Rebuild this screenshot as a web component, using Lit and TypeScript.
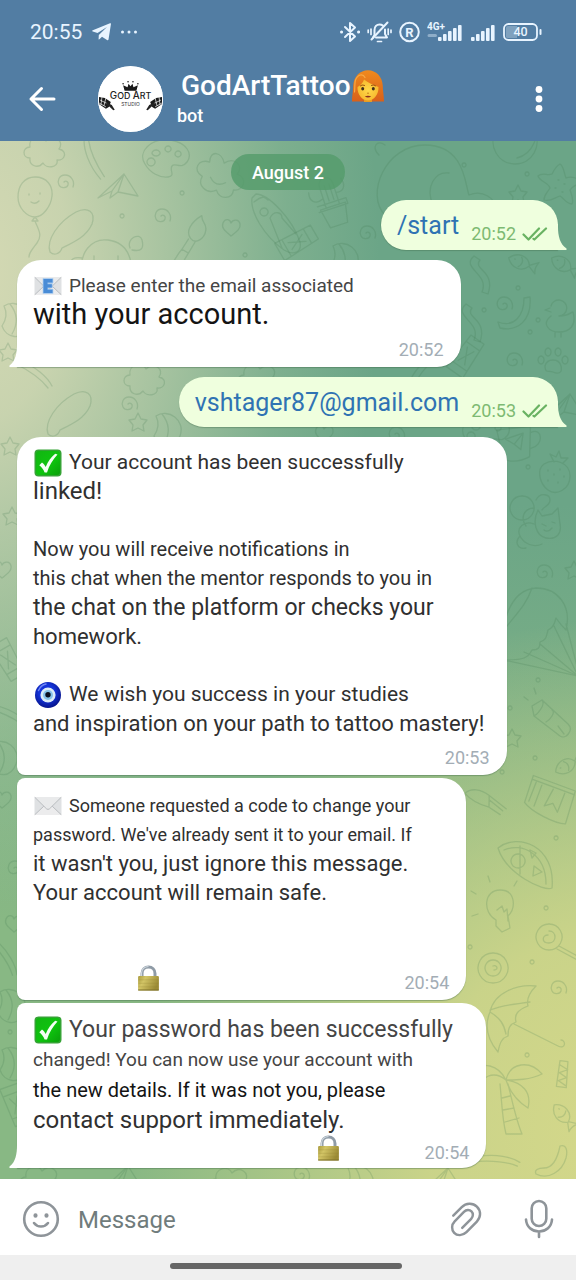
import { LitElement, html, svg, css, nothing } from "lit";
import type { TemplateResult } from "lit";
import { customElement, property } from "lit/decorators.js";
import { classMap } from "lit/directives/class-map.js";

type Size = "xs" | "s" | "m" | "ml" | "l" | "lx" | "xl" | "xxl";
interface Line { text?: string; size?: Size; icon?: string; tone?: string; }
interface Incoming {
  width: string;
  time: string;
  shape: string;
  lines: Line[];
  tail?: boolean;
  lock?: string;
}

/* ---------- small pictures ---------- */

const check = html`<svg class="emoji" viewBox="0 0 28 28" aria-label="check mark">
  <defs><linearGradient id="ck" x1="0" y1="0" x2="1" y2="1"><stop offset="0" stop-color="#12b512"/><stop offset=".55" stop-color="#0ec40e"/><stop offset="1" stop-color="#0aa00a"/></linearGradient></defs>
  <rect x=".5" y=".5" width="27" height="27" rx="4" fill="#35a335"/>
  <rect x="2" y="2" width="24" height="24" rx="3" fill="url(#ck)"/>
  <path d="M5.3 16.2 8 13.6c1.8 1.3 2.700 2.700 3.700 4.400C14 12.500 17 8.300 21.200 4.800l2.300.8C18.800 10.600 15.300 16.500 13 23.400h-2.400C9.500 20.500 7.700 18 5.300 16.200z" fill="#f4fff4"/>
</svg>`;

const nazar = html`<svg class="emoji" viewBox="0 0 28 28" aria-label="nazar amulet">
  <defs><radialGradient id="nz" cx=".45" cy=".4" r=".6"><stop offset=".5" stop-color="#1433d8"/><stop offset="1" stop-color="#06148c"/></radialGradient></defs>
  <circle cx="14" cy="14" r="13" fill="url(#nz)"/>
  <circle cx="14" cy="14" r="7.600" fill="#dcecf8"/>
  <circle cx="14" cy="14" r="5" fill="#86c3ea"/>
  <circle cx="14" cy="13.800" r="2.700" fill="#0c1020"/>
  <path d="M4.500 9.500C6 6 9 3.500 12 3" stroke="#6f86f5" stroke-width="1.500" fill="none" stroke-linecap="round"/>
</svg>`;

const envelope = (letter: boolean) => html`<svg class="emoji" viewBox="0 0 28 28" aria-label="envelope">
  <rect x=".5" y="5" width="27" height="18" fill="#dfe1e3"/>
  <path d="M.5 23 10.500 13.500h7L27.500 23z" fill="#ececed"/>
  <path d="M.5 5h27L15.500 17q-1.500 1.300-3 0z" fill="#e9eaeb"/>
  <path d="M.8 5.300 12.500 16.800q1.500 1.300 3 0L27.200 5.300M.8 22.700l9-8.500M27.200 22.700l-9-8.500" fill="none" stroke="#b9bcbf" stroke-width="1"/>
  ${letter ? svg`<path d="M9.500 7h9v3.400h-5v1.800h4.300v3.200h-4.300v2.300h5V21h-9z" fill="#4a8cd6" stroke="#9cc4ee" stroke-width="1.500" paint-order="stroke"/>` : nothing}
</svg>`;

const lock = html`<svg class="lock" viewBox="0 0 22 26" aria-label="locked">
  <defs><linearGradient id="lk" x1="0" x2="1" y1="0" y2=".4"><stop offset="0" stop-color="#a89a3c"/><stop offset=".35" stop-color="#d3c566"/><stop offset="1" stop-color="#9c8b35"/></linearGradient></defs>
  <path d="M4.500 12.500V8.500C4.500 4.500 7.300 2 11 2s6.500 2.500 6.500 6.500v4" fill="none" stroke="#8f9ba6" stroke-width="3"/>
  <path d="M4 12V8.300C4 4.300 7 1.500 11 1.500" fill="none" stroke="#cfd8df" stroke-width="1.200"/>
  <rect x=".6" y="11" width="20.800" height="14.500" rx="1" fill="url(#lk)"/>
  <path d="M1 14.800h20M1 18.300h20M1 21.800h20" stroke="#8d7f31" stroke-opacity=".3" stroke-width=".8"/>
  <path d="M.6 25h20.800" stroke="#7d702b" stroke-width="1"/>
</svg>`;

const woman = html`<svg class="woman" viewBox="0 0 34 34" aria-label="woman with red hair">
  <defs><linearGradient id="hr" x1="0" y1="0" x2="0" y2="1"><stop offset="0" stop-color="#f08a1d"/><stop offset="1" stop-color="#d9601a"/></linearGradient>
  <radialGradient id="fc" cx=".5" cy=".5" r=".6"><stop offset="0" stop-color="#ffd84a"/><stop offset="1" stop-color="#f5b52a"/></radialGradient></defs>
  <path d="M1 32.500C1 27 2 24 2.200 17 2.500 7.500 9 1.200 17 1.200S31.500 7.500 31.800 17c.2 7 1.200 10 1.200 15.500z" fill="url(#hr)"/>
  <path d="M13 27h8v6h-8z" fill="#e89c22"/>
  <path d="M6.500 18C9 16.500 12 14 13 10.500c4 3.500 9.500 5.500 14.500 7.500.3 7.500-4.500 13.500-10.500 13.500S6.200 25.500 6.500 18z" fill="url(#fc)"/>
  <path d="M14 8.500C12 4.500 7 5 4.500 11 3.500 14 4 20 3.500 23" fill="none" stroke="#f7a945" stroke-width="1.200" stroke-linecap="round"/>
  <ellipse cx="11.700" cy="19.800" rx="1.500" ry="1.800" fill="#43301c"/><ellipse cx="22.300" cy="19.800" rx="1.500" ry="1.800" fill="#43301c"/>
  <path d="M9.500 16.900q2-1.600 4-.4M20.500 16.500q2-1.200 4 .4" fill="none" stroke="#a35b14" stroke-width="1.100" stroke-linecap="round"/>
  <path d="M13.800 27.600q3.200-1.800 6.400 0-3.200 2-6.400 0z" fill="#8d2f1e"/>
  <path d="M16 24q1 .8 2 0" fill="none" stroke="#c9821a" stroke-width="1"/>
</svg>`;

const ticks = html`<svg class="ticks" viewBox="0 0 26 16" aria-label="read">
  <path d="M1.500 8.500 6.500 13.500 17 2.500M11.500 12.800l.9.7L24 2.500" fill="none" stroke="#69b262" stroke-width="2.200" stroke-linecap="round" stroke-linejoin="round"/>
</svg>`;

const tailLeft = html`<svg class="tail left" viewBox="0 0 26 26" aria-hidden="true"><path d="M8 0V3C8 12 6.500 20 .8 24.200 0 25 .3 26 1.500 26H26V0z" fill="#fff"/></svg>`;
const tailRight = html`<svg class="tail right" viewBox="0 0 26 26" aria-hidden="true"><path d="M17 0v3c0 9 2 17 8.200 21.200.8.800.5 1.800-.7 1.800H6l4-26z" fill="#efffde"/></svg>`;

/* ---------- wallpaper ---------- */

const spiral = "M0 0c2-2 5 0 4 3s-7 4-9 0 0-10 6-10 10 6 8 12";
const heart = "M0 8C-6 3-10 0-8-5s7-4 8 0C2-9 8-9 9-4S5 4 0 8z";
const star = "M0-9 3-3 9-2 5 3 6 9 0 6-6 9-5 3-9-2-3-3z";
const starfish = "M2-20C6-18 6-10 8-6c6-2 12 0 14 4-4 4-8 4-10 8 2 6 4 10 2 14-6 0-8-6-12-8-6 2-10 6-16 4 0-6 4-8 6-12-2-6-10-6-12-12 4-4 10 0 14-2 2-4 4-8 8-10zM0-4h1M6 0h1M-3 4h1M4 8h1";
const flower = "M0-18c8-10 20-4 16 6 12 0 12 14 2 16 2 10-10 14-16 6-8 8-20 2-18-8-12-2-10-16 2-16-4-12 8-14 14-4zM-8 0q8 8 16 0";
const fish = "M-12 0C-6-9 6-9 10 0l8-6c-2 5-2 8 0 12L10 1C5 9-6 9-12 0zM-6-1h.5M0-5c3 3 3 7 0 10";
const balloon = "M0-20c12 0 18 9 17 19S8 20 0 20s-17-9-17-20S-11-20 0-20zM0 20l-3 4h6zM0 24c3 8 8 14 2 22s-8 10-8 14M-6-3v1M5-4v1M-4 5q4 3 8-1";
const plane = "M-18 14 8-10 22 12 2 8-6 14-4 7zM8-10-4 7M8-10 2 8";
const palette = "M-20 4C-28-8-14-22 4-20s24 14 18 22-12 0-15 4 4 10-4 11-18-4-23-13zM-14-2a4 4 0 1 0 .1 0M-9-10a4 3 0 1 0 .1 0M3-14a3 3 0 1 0 .1 0M13-9a3 3 0 1 0 .1 0";
const brush = "M10-28C0-20-4-10 2-4s14-2 14-10S11-20 10-28zM0-3-5 8l7 3 5-12M-5 8c-4 6-6 12-9 20M2 11c-3 6-4 10-6 16";
const umbrella = "M22-28C4-30-20-22-24-2c-6 14-2 28 8 40 2-10 4-14 10-16 0-8 2-12 8-14-2-8 2-12 12-16-2-8 2-14 8-20zM-24-4C-8-10 4-10 16-12M-24-2C-14 4-10 10-8 20M0 10l44 22c8 4 8-6 3-6";
const pizza = "M-26-14C-6-30 32-16 28 26 20 30-18 12-26-14zM-20-12C-2-20 22-8 22 22M-6-8a7 7 0 1 0 .1 0M-4-16v28M10 4l8 6-9 4zM6-12l6 3-4 5z";
const bulb = "M-4 12C-18 4-16-18 0-18S16 0 8 8l2 12-8 4-6-6zM-3 2 2-2l2 6 3-3 1 12M-24-14l-5-3M-10-26l-2-6M14-22l3-5M-22 6l-6 2";
const strawberry = "M-12-10C-2-16 14-12 14 2S0 22-8 16-20-4-12-10zM-2-12l-4-8 6 3 3-6 2 7 7 0-5 5M-8-4v1M-2 0v1M4-5v1M-8 6v1M2 8v1M8 2v1";
const parachute = "M-30 30C-36 0-26-40 2-42 24-42 38-24 32 0 28-4 26-6 22-12c-2 8-4 10-8 12-2 8-2 10-8 12 0 6-2 8-8 8-4 8-8 10-28 10zM-30 30 44 46 6 14M-10 22 44 46 20-4M32-6 44 40M-30 0C-20-14-8-24-2-42";
const torch = "M-16-14-6-20 20 4C26 10 18 20 12 16L-14-4zM-6-20c4 4-4 14-8 16M4-10c4 2-2 10-6 12M10 6l6 8M-20-20l-4-3M-12-26l-2-6";
const cat = "M-8-14l4 6 10-2 6-6 2 16c2 10-4 16-14 14S-14-2-8-14zM-4 0l4 2M6-2l3 1M-2 6q4 3 8-2M-12 0c-10-4-18 4-14 12s14 12 22 8M-26 12c-6 6-2 14 6 12M-20 2c-6-8-2-18 8-18M-24-28a12 12 0 1 0 .1 0M-10-24c4-8 14-6 14 0s-6 6-8 10";
const cactus = "M-8-16C-8-26 6-26 6-16V6H-8zM-8-4c-10 4-14-2-12-10M6-6c8 2 12-4 9-12M-14 6h26l-4 20h-18zM-16 2h30v6h-30M-3-16v16M2-16v16";
const ribbon = "M-10-18c-14 12 16 18 8 36l6 2c8-24-16-24-8-34z";
const worm = "M-20 12c16 6 26-6 26-24l6-1C14 10 0 22-18 18z";
const paw = "M-8 6C-6-2 6-2 8 6s-4 8-8 6-8 2-8-6zM-12-4a3 4 0 1 0 .1 0M-5-12a3 4 0 1 0 .1 0M5-12a3 4 0 1 0 .1 0M12-4a3 4 0 1 0 .1 0";
const duck = "M-4-14a8 8 0 1 1 8 10c10 0 12-4 14-4 4 14-4 20-14 20S-14 4-4-4M-5-12l-5 2 6 2M0 12v5M6 12v5";
const croc = "M-40 20C-60 0-40-50 0-50S40-10 44 0c14-6 26 4 26 12M-40 20c-8 10-4 20 8 16M8 10C0-8 10-24 24-22M-46-40c-8-8-2-16 6-10";
const palm = "M0 0C-12-10-26-4-30 12M0 0c-8-16-24-18-32-10M0 0C4-18 24-20 36-6 24 0 10 0 0 0c16 2 26 12 22 28C12 22 4 12 0 0zM-6 4c2 20 2 34 6 50h16C10 40 6 20 2 4M-4 18l8-2M-3 30l11-2M-1 42l14-4";
const cloud = "M-16 10c-8 0-8-11 0-11-2-11 13-14 16-6 7-8 19 0 13 8 9 2 6 12-2 11 2 8-11 9-14 3-5 6-14 3-13-5z";
const rocket = "M-16-28C-4-28 20-4 28 20 30 30 22 34 12 28-8 14-22-10-20-24zM-18-20C-10-26-8-26-4-22M-2-4c4-8 12-6 12 0l14 16M-2-4l12 30M-8-14a4 4 0 1 0 .1 0";
const pig = "M-30 24c-4-24 10-38 26-36s24 14 24 34M-30 6c-14-2-14 8-6 14M18-4c-4-10 10-16 12-8s0 12-10 10M-10 10a6 6 0 1 0 .1 0M6 4v4M-18 4v4";
const speech = "M-22 22C-26 10-14-8 4-18 16-24 24-18 20-6 14 8-2 14-10 18c-2 6-8 8-12 4z";
const lolly = "M0-13a13 13 0 1 0 .1 0M0-6c8 0 8 12 0 12S-7-2-1-2M10 9l26 14M8 12l26 14";
const ball = "M0-15a15 15 0 1 0 .1 0M0-8a8 8 0 1 0 .1 0M0-2c4-2 6 4 1 4";
const planet = "M0-22a22 22 0 1 0 .1 0M18-20c8 12 0 32-16 36";
const mug = "M-18-14H16L12 16Q-2 22-14 16zM16-8c12-4 12 14-2 16M-10-4 8-8 4 8-2 2zM8-8-2 2";
const jar = "M-16-18 28-10 24 24C14 26-12 18-20 10zM-16-14l44 8M-12-12-16 8M-6-10-10 12M6-8 0 10l8-4 6 8 4-20";
const carrot = "M-14-18C-6-20 2-14 6-4M-14-18C-12-8-6 0 0 6M6-4 14 16M4 0l6 16M0 6l6 12M6-4 0 6";
const stroke = "M-14 18C-8 0 4-12 12-16M-10 20C-2 4 6-6 14-12";
const shell = "M-12-12C0-20 18-8 12 8S-10 20-14 8M-12-12c4 8 2 14-2 20M-6-14C2-4 2 6-4 16";
const banana = "M8-18c6-2 8 4 6 12C10 8-4 16-16 10-18 6-14 4-8 4 2 4 6-8 8-18z";
const dot = "M0-2a2 2 0 1 0 .1 0";
const can = "M-8-20H8L10 20H-10zM-8-12H8M-9 12H9M-4-8l4 8 4-8M-4 8l4-8 4 8";
const candy = "M-4-14H4L6 12H-4zM-4-10 5-6-3-2 5 2-3 6 5 10";

const doodles: [string, number, number, number?][] = [
  [cloud, 46, 148], [palette, 165, 160], [plane, 116, 184], [balloon, 35, 197], [spiral, 64, 182], [flower, 218, 180, 20],
  [speech, 72, 230], [spiral, 161, 216], [heart, 231, 228], [brush, 188, 242, 8], [rocket, 272, 222], [pig, 112, 252],
  [dot, 122, 216], [dot, 182, 193], [dot, 245, 255], [stroke, 92, 158, -60], [dot, 464, 165], [dot, 527, 174],
  [croc, 425, 195], [planet, 515, 142], [starfish, 558, 184], [cactus, 332, 200, -18], [spiral, 366, 233],
  [can, 297, 242, 60], [shell, 345, 258], [star, 518, 194], [fish, 520, 262, 20], [fish, 562, 264, 30], [ribbon, 484, 274],
  [worm, 518, 310], [ribbon, 476, 322], [duck, 555, 320], [spiral, 503, 304], [dot, 538, 320], [dot, 530, 332], [can, 466, 356, 35],
  [spiral, 513, 360], [paw, 553, 360], [dot, 484, 310], [dot, 518, 288],
  [shell, 16, 318], [star, 8, 352], [stroke, 36, 374, 90], [cloud, 146, 376], [speech, 70, 412], [spiral, 128, 404], [star, 138, 422], [shell, 168, 428],
  [cloud, 260, 376], [stroke, 420, 372], [heart, 324, 434], [palette, 485, 434], [plane, 562, 404], [spiral, 395, 434],
  [mug, 516, 442, -6], [strawberry, 556, 474], [dot, 528, 467], [cat, 546, 524], [spiral, 543, 572], [star, 574, 570], [parachute, 534, 630],
  [torch, 548, 720], [dot, 538, 680], [dot, 510, 708], [star, 512, 738], [dot, 535, 758], [fish, 566, 766, -30], [dot, 502, 772],
  [jar, 546, 796, 10], [carrot, 486, 802, -30], [dot, 556, 838], [pizza, 524, 862], [bulb, 500, 908], [dot, 546, 908],
  [lolly, 549, 937], [ball, 493, 968], [dot, 532, 962], [dot, 470, 947], [spiral, 557, 988], [umbrella, 514, 1014], [dot, 527, 1055],
  [candy, 562, 1075, 8], [palm, 506, 1080], [fish, 562, 1114, 50], [banana, 552, 1164], [stroke, 500, 1160, 60],
  [star, 10, 446], [star, 12, 516], [heart, 2, 570], [can, 8, 660, 150], [stroke, 10, 715, 80], [shell, 4, 756], [heart, 2, 800], [spiral, 14, 868],
  [heart, 14, 924], [stroke, 6, 958, 110], [shell, 12, 1004], [dot, 10, 1032], [shell, 14, 1062], [can, 16, 1105, 160],
  [cloud, 42, 1178], [plane, 120, 1176], [cloud, 232, 1180], [spiral, 300, 1174], [shell, 360, 1180], [plane, 440, 1178],
];

const base = css`
  :host { font-family: Roboto, "Noto Sans", sans-serif; }
`;

/* ---------- elements ---------- */

@customElement("status-bar")
class StatusBar extends LitElement {
  static styles = [base, css`
    :host { display: flex; align-items: center; justify-content: space-between; height: 64px; padding: 0 34px 0 30px; color: #e8f4ff; }
    .side { display: flex; align-items: center; gap: 7px; }
    .clock { font-size: 21px; line-height: 24px; margin-right: 3px; }
    svg { display: block; fill: none; stroke: currentColor; stroke-width: 2; stroke-linecap: round; stroke-linejoin: round; }
    .solid { fill: currentColor; stroke: none; }
    .label { fill: currentColor; stroke: none; font-family: Roboto, sans-serif; }
  `];
  render() {
    const bars = (x: number) => [0, 1, 2, 3, 4].map((i) => svg`<rect x=${x + i * 5} y=${15 - i * 3} width="3.600" height=${4 + i * 3} rx="1"/>`);
    return html`
      <div class="side">
        <span class="clock">20:55</span>
        <svg class="solid" width="20" height="18" viewBox="0 0 20 18"><path d="M19 .8 16.500 16.500c-.1.800-.9 1-1.500.6l-5-3.400-2.600 2.600c-.4.300-.8.200-.8-.4L6.800 12 15 4 5.500 9.900.8 8.500c-.8-.3-.8-.9 0-1.300L18 .3c.7-.3 1.100 0 1 .5z"/></svg>
        <svg class="solid" width="20" height="6" viewBox="0 0 20 6"><circle cx="3.500" cy="3" r="1.500"/><circle cx="10" cy="3" r="1.500"/><circle cx="16.500" cy="3" r="1.500"/></svg>
      </div>
      <div class="side">
        <svg width="20" height="22" viewBox="0 0 20 22"><path d="M5 6l10 9.500-5 4.500V2l5 4.500L5 16"/><path d="M1.500 11h.1M18.500 11h.1" stroke-width="3"/></svg>
        <svg width="25" height="22" viewBox="0 0 25 22"><path d="M6 16.500 7.500 14V9c0-3.300 2.200-5.500 5-5.500 1.300 0 2.500.4 3.400 1.100M18 8.500V13l2 3.500H9"/><path d="M20.500 1.500 4.500 18.500"/><path d="M10.500 20.500h4M4 8v5.500M1.200 9v2.500M21.200 8v5.500M24 9v2.500" stroke-width="1.700"/></svg>
        <svg width="21" height="22" viewBox="0 0 21 22"><circle cx="10.500" cy="11" r="9.300"/><text class="label" x="10.500" y="15.500" text-anchor="middle" font-size="13" font-weight="700">R</text></svg>
        <svg class="solid" width="36" height="22" viewBox="0 0 36 22"><text class="label" x="0" y="9" font-size="10" font-weight="700">4G+</text><g transform="translate(0 1)">${bars(11)}</g><path d="M2 14.500h2.500M5.500 14.500h3" stroke="currentColor" stroke-opacity=".4" stroke-width="3"/></svg>
        <svg class="solid" width="26" height="22" viewBox="0 0 26 22"><g transform="translate(0 1)">${bars(1)}</g></svg>
        <svg width="39" height="18" viewBox="0 0 39 18"><rect x="1" y="1" width="33" height="16" rx="4.500" stroke-width="1.800"/><path d="M3 4.500Q3 3 5 3H14V15H5Q3 15 3 13.500z" fill="currentColor" fill-opacity=".3" stroke="none"/><path d="M37.500 7v4"/><text class="label" x="17.500" y="13.200" text-anchor="middle" font-size="12.500" font-weight="500">40</text></svg>
      </div>`;
  }
}

@customElement("chat-header")
class ChatHeader extends LitElement {
  static styles = [base, css`
    :host { display: flex; align-items: center; padding: 0 19px 9px 20px; color: #fff; }
    button { display: grid; place-items: center; padding: 0; border: 0; background: none; color: inherit; cursor: pointer; }
    .back { width: 44px; height: 44px; }
    .more { width: 36px; height: 44px; margin-left: auto; }
    .avatar { width: 65px; height: 66px; margin-left: 34px; border-radius: 50%; background: #fff; overflow: hidden; }
    .who { margin-left: 14px; }
    .name { display: flex; align-items: center; margin: 0 0 0 4px; font-size: 28px; line-height: 34px; font-weight: 500; }
    .kind { margin: 0; font-size: 18px; line-height: 26px; font-weight: 500; }
    .woman { width: 34px; height: 34px; }
    svg { display: block; }
  `];
  render() {
    const machine = svg`<path d="M1 31l6 1 6 4-2 5-3 2-7-5z" fill="#1b1b1b"/><path d="M2 34l8 4M1 37l7 4M4 31l-1 8M8 32l-2 8" stroke="#fff" stroke-width=".7"/><path d="M9 36.500l5 2.500 3 5-1.500.5-4-4-4-1.500z" fill="#222"/>`;
    return html`
      <button class="back" aria-label="Back"><svg width="28" height="28" viewBox="0 0 28 28" fill="none" stroke="currentColor" stroke-width="3" stroke-linecap="round" stroke-linejoin="round"><path d="M26 14H3M13.500 3.500 3 14l10.500 10.500"/></svg></button>
      <svg class="avatar" viewBox="0 0 66 66" aria-label="God Art Studio">
        <rect width="66" height="66" fill="#fff"/>
        ${machine}<g transform="translate(66 0) scale(-1 1)">${machine}</g>
        <path d="M27 24.500 25.500 19l4.500 2 1-3.500 2 2.500 2-2.500 1 3.500 4.500-2-1.500 5.500z" fill="#1a1a1a"/>
        <g fill="#1a1a1a"><circle cx="25.500" cy="17.500" r=".8"/><circle cx="30.500" cy="15.500" r=".8"/><circle cx="35.500" cy="15.500" r=".8"/><circle cx="40.500" cy="17.500" r=".8"/></g>
        <text x="33" y="32.500" text-anchor="middle" font-family="Inter" font-size="9" font-weight="500" fill="#222"><tspan font-size="10">G</tspan>OD <tspan font-size="10">A</tspan>RT</text>
        <text x="33" y="40" text-anchor="middle" font-family="Inter" font-size="5" fill="#333">STUDIO</text>
      </svg>
      <div class="who">
        <h1 class="name">GodArtTattoo${woman}</h1>
        <p class="kind">bot</p>
      </div>
      <button class="more" aria-label="More options"><svg width="8" height="28" viewBox="0 0 8 28" fill="currentColor"><circle cx="4" cy="4.500" r="3.400"/><circle cx="4" cy="14" r="3.400"/><circle cx="4" cy="23.500" r="3.400"/></svg></button>`;
  }
}

@customElement("message-in")
class MessageIn extends LitElement {
  @property({ attribute: false }) message!: Incoming;
  static styles = [base, css`
    :host { display: block; }
    .bubble { position: relative; box-sizing: border-box; margin-left: 17px; padding: 11px 17px 7px 16px; background: #fff; border-radius: 24px; box-shadow: 0 1px 1px rgba(60, 100, 70, .4); }
    .line { display: flex; align-items: center; height: 29px; white-space: nowrap; color: #303030; line-height: 29px; }
    .blank { height: 29px; }
    .room { height: 56px; }
    .foot { display: flex; align-items: flex-end; height: 30px; }
    .first { border-bottom-left-radius: 8px; }
    .middle { border-top-left-radius: 8px; border-bottom-left-radius: 8px; padding-top: 13px; }
    .last { border-top-left-radius: 8px; border-bottom-left-radius: 0; padding-top: 12px; padding-bottom: 5px; }
    .last .line { height: 30px; line-height: 30px; }
    .last .foot { height: 28px; }
    .single { border-bottom-left-radius: 0; }
    .single .foot { height: 31px; }
    .xs { font-size: 18px; }
    .s { font-size: 19px; }
    .m { font-size: 20px; }
    .ml { font-size: 21px; }
    .l { font-size: 22px; }
    .lx { font-size: 23px; }
    .xl { font-size: 24px; }
    .xxl { font-size: 29px; }
    .dark { color: #141414; }
    .soft { color: #454545; }
    .emoji { width: 28px; height: 28px; margin: 0 7px 0 1px; flex: none; }
    .lock-slot { display: flex; }
    .lock { width: 23px; height: 26px; margin-bottom: 2px; }
    time { margin-left: auto; font-size: 18px; line-height: 20px; color: #a3adb5; }
    .tail { position: absolute; left: -8px; bottom: 0; width: 26px; height: 26px; }
  `];
  private icon(name?: string): TemplateResult | typeof nothing {
    if (name === "check") return check;
    if (name === "nazar") return nazar;
    if (name === "mail") return envelope(false);
    if (name === "email") return envelope(true);
    return nothing;
  }
  render() {
    const m = this.message;
    return html`<article class=${classMap({ bubble: true, [m.shape]: true })} style="width:${m.width}">
      ${m.tail ? tailLeft : nothing}
      ${m.lines.map((l) => l.text
        ? html`<div class="line ${l.size} ${l.tone ?? ""}">${this.icon(l.icon)}<span>${l.text}</span></div>`
        : html`<div class=${l.tone ?? "blank"}></div>`)}
      <div class="foot">
        ${m.lock ? html`<span class="lock-slot" style="margin-left:${m.lock}">${lock}</span>` : nothing}
        <time>${m.time}</time>
      </div>
    </article>`;
  }
}

@customElement("message-out")
class MessageOut extends LitElement {
  @property() text = "";
  @property() time = "";
  static styles = [base, css`
    :host { display: flex; justify-content: flex-end; }
    .bubble { position: relative; display: flex; align-items: flex-end; height: 50px; box-sizing: border-box; margin-right: 18px; padding: 0 10px 6px 16px; background: #efffde; border-radius: 25px 25px 0 25px; box-shadow: 0 1px 1px rgba(60, 100, 70, .35); }
    a { position: relative; font-size: 25px; line-height: 37px; color: #2f73b3; text-decoration: none; }
    time { position: relative; margin-left: 12px; font-size: 18px; line-height: 20px; color: #7dba72; }
    .ticks { position: relative; width: 26px; height: 16px; margin: 0 0 2px 6px; }
    .tail { position: absolute; right: -9px; bottom: 0; width: 26px; height: 26px; }
  `];
  render() {
    return html`<article class="bubble">${tailRight}<a href="#">${this.text}</a><time>${this.time}</time>${ticks}</article>`;
  }
}

@customElement("message-composer")
class MessageComposer extends LitElement {
  static styles = [base, css`
    :host { display: flex; align-items: center; box-sizing: border-box; height: 76px; padding: 3px 16px 0 20px; background: #fff; color: #8e9499; }
    button { display: grid; place-items: center; width: 42px; height: 44px; padding: 0; border: 0; background: none; color: inherit; cursor: pointer; flex: none; }
    input { flex: 1; min-width: 0; height: 44px; margin: 2px 0 0 16px; padding: 0; border: 0; outline: 0; background: none; font-family: inherit; font-size: 24px; color: #222; }
    input::placeholder { color: #707c7c; opacity: 1; }
    .attach { margin-right: 31px; }
    svg { display: block; fill: none; stroke: currentColor; stroke-width: 2.600; stroke-linecap: round; stroke-linejoin: round; }
  `];
  render() {
    return html`
      <button aria-label="Emoji"><svg width="38" height="38" viewBox="0 0 38 38"><circle cx="19" cy="19" r="16.800"/><path d="M12 23c3.500 4.700 10.500 4.700 14 0"/><ellipse cx="13.500" cy="15.500" rx="1.300" ry="1.500" fill="currentColor" stroke-width="1.600"/><ellipse cx="24.500" cy="15.500" rx="1.300" ry="1.500" fill="currentColor" stroke-width="1.600"/></svg></button>
      <input type="text" placeholder="Message" aria-label="Message">
      <button class="attach" aria-label="Attach"><svg width="34" height="36" viewBox="0 0 36 38"><path d="M4.500 15.500 13.500 6.500C18 2 25 1.500 29.500 6s4.500 11 0 15.700L18.500 33C14.500 37 8.500 37 5.500 33.700s-3-8.700.5-12.200L15.800 11.500c2.500-2.500 6-2.500 8-.5s2 5.500-.3 7.800L14 28.500"/></svg></button>
      <button aria-label="Voice message"><svg width="30" height="42" viewBox="0 0 30 42"><rect x="7.700" y="3" width="14.600" height="25" rx="7.300"/><path d="M2 21.500C2.500 29 8 33.500 15 33.500S27.500 29 28 21.500M15 33.500V39"/></svg></button>`;
  }
}

@customElement("app-root")
class AppRoot extends LitElement {
  static styles = [base, css`
    :host { display: flex; flex-direction: column; min-height: 100vh; background: #efefef; }
    .top { background: #527da3; display: flex; flex-direction: column; gap: 2px; }
    .chat {
      position: relative; flex: 1; display: flex; flex-direction: column; gap: 10px; padding: 13px 0 11px; overflow: hidden;
      background:
        radial-gradient(ellipse 72% 62% at -6% 12%, #d6dab4 0%, rgba(208, 215, 178, .92) 25%, rgba(200, 212, 174, .6) 52%, rgba(180, 205, 165, .25) 78%, rgba(170, 200, 160, 0) 100%),
        radial-gradient(ellipse 85% 50% at 108% 96%, #d5d88a 0%, rgba(213, 216, 138, .85) 40%, rgba(213, 216, 138, 0) 100%),
        linear-gradient(180deg, #6ba587 0%, #6ba587 35%, #88b884 75%, #88b884 100%);
    }
    .wallpaper { position: absolute; inset: 0; width: 100%; height: 100%; fill: none; stroke: #3f7a50; stroke-opacity: .2; stroke-width: 1.300; stroke-linecap: round; stroke-linejoin: round; }
    .date { position: relative; align-self: center; padding: 1px 21px 0; border-radius: 18px; background: rgba(84, 155, 106, .8); color: #fff; font-size: 18px; line-height: 35px; font-weight: 500; }
    message-in, message-out { position: relative; }
    .thread { display: flex; flex-direction: column; gap: 3px; }
    .nav { height: 25px; display: grid; place-items: center; padding-right: 4px; background: #efefef; }
    .handle { width: 232px; max-width: 60%; height: 6px; margin-bottom: 4px; border-radius: 3px; background: #666; }
  `];

  private ask: Incoming = {
    width: "77%", time: "20:52", shape: "single", tail: true,
    lines: [
      { text: "Please enter the email associated", size: "s", icon: "email", tone: "soft" },
      { text: "with your account.", size: "xxl", tone: "dark" },
    ],
  };

  private replies: Incoming[] = [
    {
      width: "85%", time: "20:53", shape: "first",
      lines: [
        { text: "Your account has been successfully", size: "ml", icon: "check" },
        { text: "linked!", size: "xl" },
        {},
        { text: "Now you will receive notifications in", size: "m" },
        { text: "this chat when the mentor responds to you in", size: "m" },
        { text: "the chat on the platform or checks your", size: "lx" },
        { text: "homework.", size: "l" },
        {},
        { text: "We wish you success in your studies", size: "ml", icon: "nazar" },
        { text: "and inspiration on your path to tattoo mastery!", size: "l" },
      ],
    },
    {
      width: "78%", time: "20:54", shape: "middle", lock: "25%",
      lines: [
        { text: "Someone requested a code to change your", size: "xs", icon: "mail" },
        { text: "password. We've already sent it to your email. If", size: "xs" },
        { text: "it wasn't you, just ignore this message.", size: "l" },
        { text: "Your account will remain safe.", size: "l" },
        { tone: "room" },
      ],
    },
    {
      width: "81.5%", time: "20:54", shape: "last", tail: true, lock: "65%",
      lines: [
        { text: "Your password has been successfully", size: "lx", icon: "check", tone: "soft" },
        { text: "changed! You can now use your account with", size: "s", tone: "soft" },
        { text: "the new details. If it was not you, please", size: "m", tone: "dark" },
        { text: "contact support immediately.", size: "xl" },
      ],
    },
  ];

  render() {
    return html`
      <header class="top"><status-bar></status-bar><chat-header></chat-header></header>
      <main class="chat">
        <svg class="wallpaper" viewBox="0 141 576 1038" preserveAspectRatio="xMidYMin slice" aria-hidden="true">
          ${doodles.map(([d, x, y, r]) => svg`<path transform="translate(${x} ${y}) rotate(${r ?? 0})" d=${d}/>`)}
        </svg>
        <div class="date">August 2</div>
        <message-out text="/start" time="20:52"></message-out>
        <message-in .message=${this.ask}></message-in>
        <message-out text="vshtager87@gmail.com" time="20:53"></message-out>
        <div class="thread">${this.replies.map((m) => html`<message-in .message=${m}></message-in>`)}</div>
      </main>
      <message-composer></message-composer>
      <footer class="nav"><div class="handle"></div></footer>`;
  }
}
